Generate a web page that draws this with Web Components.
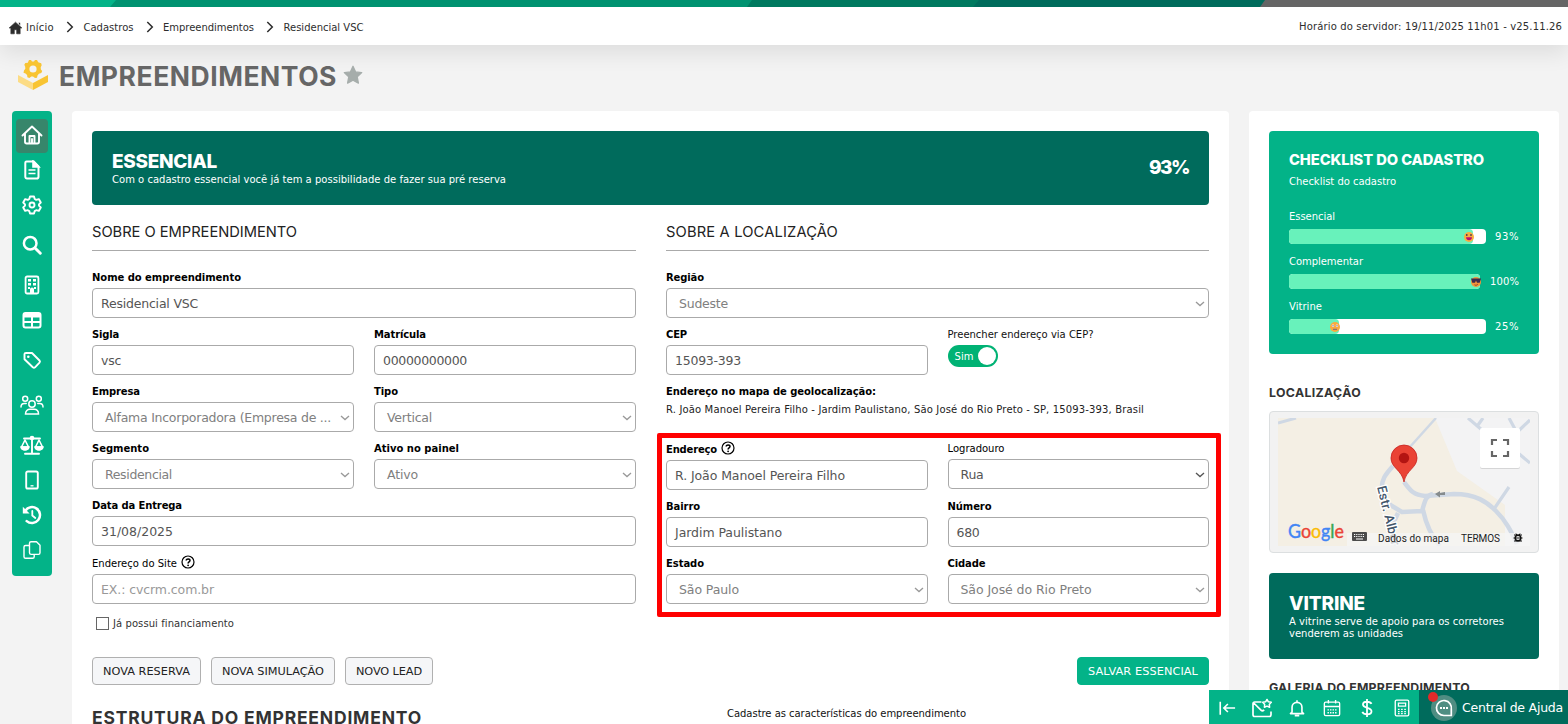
<!DOCTYPE html>
<html lang="pt-BR">
<head>
<meta charset="utf-8">
<title>Empreendimentos</title>
<style>
  :root{
    --green:#03b388;
    --dark:#006b5c;
    --title:Inter,"Liberation Sans",sans-serif;
  }
  html,body{
    margin:0;
    height:724px;
    overflow:hidden;
  }
  body{
    font:10px/12px "DejaVu Sans",sans-serif;
    color:#222;
    background:#f3f3f3;
    position:relative;
  }
</style>
</head>
<body>
<crm-app></crm-app>

<script>
const ICONS = {
  house:['0 0 24 24','<path d="M12 2 1 12h3v10h6v-7h4v7h6V12h3z" fill="currentColor" stroke="currentColor" stroke-linejoin="round"/><path d="M17 3h3v5" fill="currentColor"/>'],
  chevron:['0 0 8 12','<path d="M1.300 1 6.300 6l-5 5" fill="none" stroke="currentColor" stroke-width="1.500"/>'],
  down:['0 0 10 6','<path d="M1 1l4 3.600L9 1" fill="none" stroke="currentColor" stroke-width="1.300"/>'],
  star:['0 0 24 24','<path d="M12 1.500l3.200 6.800 7.300.9-5.400 5.100 1.400 7.400L12 18.100l-6.500 3.600 1.400-7.400L1.500 9.200l7.300-.9z" fill="currentColor" stroke="currentColor" stroke-width="1.500" stroke-linejoin="round"/>'],
  product:['0 0 30 30','<path d="M0 15l15 8v7L0 22z" fill="#fcdc85"/><path d="M30 15l-15 8v7l15-8z" fill="#f8c433"/><path d="M11 0h2l1 1.600h2L17 0h2l1.200 2.300 3 .9.500 2-1 2 .2 2.300 1.300 1.600-.9 2-2.400.6-1.400 1.900-.5 2.200-2 .2-2-1.400h-1.700l-1.900 1.400-2-.8-.3-2.300-1.600-1.300-2-.8L6 10.500l1.300-1.700-.1-2-.9-2 1-1.700 2.500-.4z" fill="#f8c433"/><circle cx="15" cy="9" r="3.600" fill="#f3f3f3"/>'],
  home:['0 0 22 22','<path d="M1.500 11.500 11 2.500l9.500 9M4 9.500v8.300c0 1.100.6 1.700 1.700 1.700h10.600c1.100 0 1.700-.6 1.700-1.700V9.500M8.500 19v-7h5v7M11 15v4" fill="none" stroke="currentColor" stroke-width="1.900" stroke-linecap="round" stroke-linejoin="round"/>'],
  doc:['0 0 20 20','<path d="M4.500 1.500h7.300l4.700 4.800v10.400c0 1-.7 1.800-1.800 1.800H5c-1 0-1.700-.7-1.700-1.800V3.200c0-1 .5-1.700 1.200-1.700z" fill="none" stroke="currentColor" stroke-width="2"/><path d="M11 1l6 6h-6zM6.500 10h7M6.500 13.500h7" fill="currentColor" stroke="currentColor" stroke-width="1.600"/>'],
  gear:['0 0 20 20','<path d="M8 1.500h4l.7 2.500 1.500.8 2.600-.7 2 3.400-1.800 1.800v1.400l1.800 1.800-2 3.400-2.600-.7-1.500.9-.7 2.400H8l-.7-2.400-1.500-.9-2.600.7-2-3.400L3 10.700V9.300L1.200 7.500l2-3.400 2.600.7L7.300 4z" fill="none" stroke="currentColor" stroke-width="1.900" stroke-linejoin="round"/><circle cx="10" cy="10" r="2.500" fill="none" stroke="currentColor" stroke-width="1.900"/>'],
  search:['0 0 20 20','<circle cx="8.200" cy="8.200" r="6.300" fill="none" stroke="currentColor" stroke-width="2.500"/><path d="M13 13l5.300 5.300" stroke="currentColor" stroke-width="2.900" stroke-linecap="round"/>'],
  building:['0 0 20 20','<rect x="3.600" y="1.500" width="12.800" height="17" rx="1.500" fill="none" stroke="currentColor" stroke-width="1.800"/><path d="M6 4h3v2.500H6zM11 4h3v2.500h-3zM6 8h3v2.500H6zM11 8h3v2.500h-3zM6 12h2v2H6zM12 12h2v2h-2zM8 18v-3.500a2 2 0 0 1 4 0V18z" fill="currentColor"/>'],
  table:['0 0 20 20','<rect x="1.500" y="3" width="17" height="14.500" rx="2" fill="none" stroke="currentColor" stroke-width="2"/><path d="M1 3h18v4.500H1z" fill="currentColor"/><path d="M10 7v10M2 12h16" stroke="currentColor" stroke-width="2"/>'],
  tag:['0 0 20 20','<path d="M2.500 4v5.300l8.300 8c.7.600 1.600.600 2.200 0l4.500-4.700c.6-.7.6-1.500 0-2.100L10 3H4c-1 0-1.500.3-1.500 1z" fill="none" stroke="currentColor" stroke-width="1.900" stroke-linejoin="round"/><circle cx="6.300" cy="6.700" r="1.300" fill="currentColor"/>'],
  people:['0 0 24 20','<g fill="none" stroke="currentColor" stroke-width="1.500" stroke-linecap="round"><circle cx="12" cy="9" r="3.200"/><circle cx="5.200" cy="3.700" r="2.500"/><circle cx="18.800" cy="3.700" r="2.500"/><path d="M5.500 19c0-3 2-4.800 4.500-4.800h4c2.500 0 4.500 1.800 4.500 4.800zM1 12c0-2.200 1.500-3.600 3.300-3.600h1.900M23 12c0-2.200-1.500-3.600-3.300-3.600h-1.900"/></g>'],
  scale:['0 0 24 20','<path d="M4 3.500h16M12 2v16M5 18.700h14" fill="none" stroke="currentColor" stroke-width="1.900" stroke-linecap="round"/><circle cx="12" cy="3" r="2.300" fill="currentColor"/><path d="M5 5 1.500 12h7zM19 5l-3.500 7h7z" fill="none" stroke="currentColor" stroke-width="1.600" stroke-linejoin="round"/><path d="M.2 11.300h9.600c0 6-9.600 6-9.600 0zM14.200 11.300h9.600c0 6-9.600 6-9.600 0z" fill="currentColor"/>'],
  phone:['0 0 20 20','<rect x="4.200" y="1.500" width="11.600" height="17" rx="1.600" fill="none" stroke="currentColor" stroke-width="1.900"/><path d="M8.500 15.800h3" stroke="currentColor" stroke-width="1.300"/>'],
  history:['0 0 20 20','<path d="M3.300 5.700a8 8 0 1 1 1.400 10.400" fill="none" stroke="currentColor" stroke-width="2.500" stroke-linecap="round"/><path d="M.8 1.800v6.600h6.800z" fill="currentColor"/><path d="M10.300 6v4.500l3 2.500" fill="none" stroke="currentColor" stroke-width="1.800" stroke-linecap="round"/>'],
  copy:['0 0 20 20','<g fill="none" stroke="currentColor" stroke-width="1.400" stroke-linejoin="round"><path d="M9 1.700h5.500l3.500 3.500v7.600c0 1-.6 1.600-1.600 1.600H9.200c-1 0-1.700-.6-1.700-1.600V3.300c0-1 .5-1.600 1.500-1.600z"/><path d="M7.500 5.500H3.600C2.600 5.500 2 6.100 2 7.100v9.600c0 1 .6 1.600 1.600 1.600h7c1 0 1.600-.6 1.600-1.600v-2.200"/></g>'],
  help:['0 0 14 14','<circle cx="7" cy="7" r="6" fill="none" stroke="currentColor" stroke-width="1.200"/><path d="M5.200 5.600C5.200 3.300 9 3.400 9 5.500 9 7 7.100 6.900 7.100 8.400" fill="none" stroke="currentColor" stroke-width="1.500"/><circle cx="7.100" cy="10.300" r=".9" fill="currentColor"/>'],
  collapse:['0 0 20 20','<path d="M2.500 3v14.500M19 10H6.500M11 5.500 6.500 10l4.500 4.500" fill="none" stroke="currentColor" stroke-width="1.800"/>'],
  mail:['0 0 22 20','<path d="M10.500 4H3.800C2.600 4 2 4.600 2 5.700v11.100c0 1.100.6 1.700 1.800 1.700h14.400c1.200 0 1.800-.6 1.800-1.700v-3.300M2.800 5l7.400 7.300c.8.700 1.800.6 3-.5" fill="none" stroke="currentColor" stroke-width="1.700"/><path d="M16 1.500l1.400 2.300 2.900.5-2 2.200.3 2.700-2.600-1.100-2.600 1.100.3-2.700-2-2.200 2.900-.5z" fill="none" stroke="currentColor" stroke-width="1.500" stroke-linejoin="round"/>'],
  bell:['0 0 20 20','<path d="M4.500 14.500V9.300c0-3 2.300-5.500 5.500-5.500s5.500 2.500 5.500 5.500v5.200l1.800 1.700H2.700zM10 3.500V1.500M7.500 18.500h5" fill="none" stroke="currentColor" stroke-width="1.800" stroke-linejoin="round"/>'],
  calendar:['0 0 20 20','<rect x="1.500" y="3.500" width="17" height="15" rx="1.500" fill="none" stroke="currentColor" stroke-width="1.500"/><path d="M2 8.300h16M6 1v4M14 1v4" stroke="currentColor" stroke-width="1.500"/><path d="M5 12h10M5 15.300h10" stroke="currentColor" stroke-width="1.500" stroke-dasharray="1.600 1.200"/>'],
  dollar:['0 0 20 20','<path d="M10 0v20M15 5.500C13.500 2.300 5.500 2 5.500 6.200c0 4.600 9.500 2.600 9.500 7.400 0 4.500-8.700 4.200-10.200.7" fill="none" stroke="currentColor" stroke-width="2"/>'],
  calc:['0 0 20 20','<rect x="2.500" y="1.200" width="15" height="17.600" rx="1.500" fill="none" stroke="currentColor" stroke-width="1.500"/><path d="M6 4.500h8v3.500H6z" fill="none" stroke="currentColor" stroke-width="1.400"/><path d="M5.500 11.500h9M5.500 14h9M5.500 16.300h9" stroke="currentColor" stroke-width="1.300" stroke-dasharray="1.800 1.700"/>'],
  chat:['0 0 26 26','<circle cx="13" cy="13" r="13" fill="#4f8d82"/><path d="M20 20.500h-7a7.500 7.500 0 1 1 7.300-6v6z" fill="none" stroke="currentColor" stroke-width="1.700"/><path d="M9 13h2M12 13h2M15 13h2" stroke="currentColor" stroke-width="2"/>'],
  happy:['0 0 10 10','<circle cx="5" cy="5" r="5" fill="#f9ac40"/><path d="M2 5.200h6c0 4-6 4-6 0z" fill="#b80d72"/><path d="M2.800 2v2M7 2v2" stroke="#43304d" stroke-width="1.200"/>'],
  cool:['0 0 10 10','<circle cx="5" cy="5" r="5" fill="#f4943a"/><path d="M0 1.500h10L8.700 5.700H6L5 3.500l-1 2.200H1.300z" fill="#3d284e"/><path d="M3.500 7.800c1.400.8 2.300.4 3.300-.6" fill="none" stroke="#863e35"/>'],
  meh:['0 0 10 10','<circle cx="5" cy="5" r="5" fill="#f9a93f"/><circle cx="3" cy="3.800" r="1.200" fill="#fff"/><circle cx="7" cy="3.800" r="1.200" fill="#fff"/><path d="M3 3v1.500M7 3v1.500M3 7.300h4" stroke="#776280"/>']
};

class AppIcon extends HTMLElement{
  connectedCallback(){
    const [box, body] = ICONS[this.getAttribute('name')];
    const w = this.getAttribute('w');
    const h = this.getAttribute('h') || w;
    this.attachShadow({mode: 'open'}).innerHTML = `
    <style>
      :host{ display:inline-flex; flex:none; }
      svg{ display:block; }
    </style>
    <svg width="${w}" height="${h}" viewBox="${box}">${body}</svg>`;
  }
}

// Single line of text, tracked so that it spans "w" pixels
class FitText extends HTMLElement{
  connectedCallback(){
    this.attachShadow({mode: 'open'}).innerHTML = `
    <style>
      :host{ display:inline-block; white-space:nowrap; }
    </style>
    <span><slot></slot></span>`;
    const span = this.shadowRoot.querySelector('span');
    const gap = this.getAttribute('w') - span.getBoundingClientRect().width;
    span.style.letterSpacing = `${gap / this.textContent.length}px`;
  }
}

class TopBar extends HTMLElement{
  connectedCallback(){
    const crumbs = [['Início', 28], ['Cadastros', 50], ['Empreendimentos', 91], ['Residencial VSC', 80]];
    this.attachShadow({mode: 'open'}).innerHTML = `
    <style>
      :host{ display:block; }
      .strip{ display:block; }
      nav{
        height:38px;
        box-sizing:border-box;
        padding:3px 6px 0 8px;
        display:flex;
        align-items:center;
        background:#fff;
        color:#2d2d2d;
        box-shadow:0 8px 22px rgba(0,0,0,.09);
      }
      .home{ margin-right:3px; }
      .sep{ margin:0 9.500px 0 12px; padding-bottom:2px; }
      .time{ margin-left:auto; padding-bottom:2px; }
    </style>
    <svg class="strip" width="1568" height="7">
      <rect width="1568" height="7" fill="#656565"/>
      <path d="M0 0h1265l-5 7H0z" fill="#006b5c"/>
      <path d="M0 0h979l-6 7H0z" fill="#00795f"/>
      <path d="M0 0h752l-5 7H0z" fill="#009270"/>
      <path d="M0 0h116l-6 7H0z" fill="#03b388"/>
    </svg>
    <nav>
      <app-icon class="home" name="house" w="15" h="14"></app-icon>
      ${crumbs.map(([t, w]) => `<fit-text w="${w}">${t}</fit-text>`).join('<app-icon class="sep" name="chevron" w="8" h="12"></app-icon>')}
      <fit-text class="time" w="263">Horário do servidor: 19/11/2025 11h01 - v25.11.26</fit-text>
    </nav>`;
  }
}

class SideMenu extends HTMLElement{
  connectedCallback(){
    const items = [['home', 22, 0], ['doc', 20, 0], ['gear', 20, 0], ['search', 20, 5], ['building', 20, 5], ['table', 20, 0],
      ['tag', 20, 5], ['people', 24, 10], ['scale', 24, 5], ['phone', 20, 0], ['history', 20, 0], ['copy', 20, 0]];
    this.attachShadow({mode: 'open'}).innerHTML = `
    <style>
      :host{
        display:flex;
        flex-direction:column;
        padding:7px 4px 8px;
        border-radius:4px;
        background:var(--green);
        color:#fff;
      }
      div{
        height:35px;
        box-sizing:border-box;
        padding:0 1px 1px 0;
        display:flex;
        align-items:center;
        justify-content:center;
      }
      div.active{
        height:34px;
        margin-top:1px;
        padding-bottom:2px;
        border-radius:4px;
        background:#37866b;
      }
    </style>
    ${items.map(([n, w, m], i) => `<div class="${i ? '' : 'active'}" style="${m ? `margin-top:${m}px` : ''}"><app-icon name="${n}" w="${w}" h="${w > 22 ? 20 : w}"></app-icon></div>`).join('')}`;
  }
}

class FormField extends HTMLElement{
  connectedCallback(){
    const get = n => this.getAttribute(n);
    const kind = get('kind') || 'input';
    this.attachShadow({mode: 'open'}).innerHTML = `
    <style>
      :host{ display:block; color:#000; }
      :host([wide]){ grid-column:span 2; }
      label{
        display:flex;
        align-items:center;
        height:27px;
        box-sizing:border-box;
        padding-top:7px;
        font-weight:bold;
      }
      :host([light]) label{ font-weight:normal; }
      :host([help]) label{ height:28px; padding-top:8px; }
      :host([help]) app-icon.help{ margin:-4px 0 0 4px; }
      .box{
        height:30px;
        box-sizing:border-box;
        border:1px solid #aaa;
        border-radius:4px;
        padding:2px 3px 0 8px;
        display:flex;
        align-items:center;
        justify-content:space-between;
        background:#fff;
        color:#555;
        font-size:12.500px;
        line-height:16px;
      }
      .select{ padding-left:12px; color:#808080; }
      .strong{ color:#555; }
      .select:not(.strong) app-icon{ color:#999; }
      .hint{ color:#999; }
    </style>
    <label><fit-text w="${get('lw')}">${get('label')}</fit-text>${this.hasAttribute('help') ? '<app-icon class="help" name="help" w="14"></app-icon>' : ''}</label>
    <div class="box ${kind}">
      <fit-text w="${get('vw')}">${get('value')}</fit-text>
      ${kind.includes('select') ? '<app-icon name="down" w="10" h="6"></app-icon>' : ''}
    </div>`;
  }
}

class TitleBanner extends HTMLElement{
  connectedCallback(){
    this.attachShadow({mode: 'open'}).innerHTML = `
    <style>
      :host{
        display:flex;
        justify-content:space-between;
        box-sizing:border-box;
        padding:20px;
        border-radius:4px;
        background:var(--dark);
        color:#fff;
      }
      h2{
        margin:0 0 2px;
        font:800 19px/21px var(--title);
      }
      .side{ font:800 19px/21px var(--title); padding-top:6px; }
    </style>
    <div><h2><slot name="title"></slot></h2><slot></slot></div>
    <div class="side"><slot name="side"></slot></div>`;
  }
}

class ProgressRow extends HTMLElement{
  connectedCallback(){
    const get = n => this.getAttribute(n);
    this.attachShadow({mode: 'open'}).innerHTML = `
    <style>
      :host{ display:block; height:45px; }
      .row{ display:flex; align-items:center; justify-content:space-between; margin-top:6px; }
      .track{ height:15px; width:${get('track')}px; border-radius:4px; background:#fff; }
      .fill{
        height:15px;
        width:${get('fill')}px;
        border-radius:4px;
        background:#68f2bb;
        display:flex;
        align-items:center;
        justify-content:flex-end;
      }
      .fill app-icon{ margin-right:-1px; }
    </style>
    <fit-text w="${get('lw')}">${get('label')}</fit-text>
    <div class="row">
      <div class="track"><div class="fill"><app-icon name="${get('face')}" w="10"></app-icon></div></div>
      <fit-text w="${get('pw')}">${get('percent')}</fit-text>
    </div>`;
  }
}

class MapPreview extends HTMLElement{
  connectedCallback(){
    this.attachShadow({mode: 'open'}).innerHTML = `
    <style>
      :host{
        display:block;
        box-sizing:border-box;
        height:142px;
        padding:6px 8px;
        border:1px solid #dcdfe0;
        border-radius:4px;
        background:#f2f2f2;
      }
      svg{ display:block; }
      text{ font-family:Roboto,sans-serif; }
    </style>
    <svg width="252" height="128" viewBox="0 0 252 128">
      <rect width="252" height="128" fill="#f3f3f4"/>
      <path d="M0 0h157l22 53 48 34v41H0z" fill="#f4efe4"/>
      <g fill="none" stroke="#cfd8e4" stroke-linejoin="round">
        <path d="M0 5 18 0" stroke-width="3"/>
        <path d="M158 0 131 30" stroke-width="2.500"/>
        <path d="M126 64c6 8 9 13 21 14l29-2c22 0 33 8 42 17 10 10 15 20 21 33" stroke-width="4.500"/>
        <path d="M115 48c-7 8-12 13-11 24 1 7 4 12 10 16l10 6 20-1c3-9 3-15 11-17M145 92c3 14 7 25 17 36M120 95l-7 15 6 18" stroke-width="4.500"/>
        <path d="M216 91l15-22M190 0l14 12M200 7l5-7M231 0l7 13M252 2l-18 17M240 35l12 10" stroke-width="3.200"/>
      </g>
      <path d="M167 77h-5v2.500l-5-3.500 5-3v2l5-1z" fill="#858b8d"/>
      <path d="M126 64c-2-12-13-14-13-24a13 13 0 0 1 26 0c0 10-11 12-13 24z" fill="#ea4335" stroke="#c5221f" stroke-width=".8"/>
      <circle cx="126" cy="40" r="5.200" fill="#b31412"/>
      <text transform="translate(99 69) rotate(76)" font-size="13" font-weight="500" fill="#43566b" stroke="#fff" stroke-width="2.500" paint-order="stroke" textLength="61" lengthAdjust="spacingAndGlyphs">Estr. Alber</text>
      <rect x="69" y="115" width="183" height="13" fill="#f5f5f5" opacity=".75"/>
      <text x="10" y="120" font-size="19" stroke-width=".4" textLength="56" lengthAdjust="spacingAndGlyphs" style="font-family:Lato,sans-serif"><tspan fill="#4285f4" stroke="#4285f4">G</tspan><tspan fill="#ea4335" stroke="#ea4335">o</tspan><tspan fill="#fbbc05" stroke="#fbbc05">o</tspan><tspan fill="#4285f4" stroke="#4285f4">g</tspan><tspan fill="#34a853" stroke="#34a853">l</tspan><tspan fill="#ea4335" stroke="#ea4335">e</tspan></text>
      <rect x="74" y="114" width="15" height="9" rx="1" fill="#4b4b4b"/>
      <path d="M76 116.500h11M76 118.500h11" stroke="#fff" stroke-dasharray="1.200 1"/>
      <path d="M78 121h7" stroke="#fff"/>
      <text x="100" y="124" font-size="10" fill="#222" textLength="71">Dados do mapa</text>
      <text x="183" y="124" font-size="10" fill="#222" textLength="39">TERMOS</text>
      <g stroke="#111" fill="none"><circle cx="240" cy="120" r="2.800" stroke-width="1.500"/><path d="M236 117h8M235.500 120h9M236 123h8M238 115.500l1 2M242 115.500l-1 2" stroke-width="1"/></g>
      <rect x="202" y="11" width="40" height="40" rx="2" fill="#000" opacity=".12"/>
      <rect x="202" y="10" width="40" height="40" rx="2" fill="#fff"/>
      <path d="M214 27v-5h5M225 22h5v5M230 33v5h-5M219 38h-5v-5" fill="none" stroke="#666" stroke-width="2.200"/>
    </svg>`;
  }
}

class CrmButton extends HTMLElement{
  connectedCallback(){
    this.attachShadow({mode: 'open'}).innerHTML = `
    <style>
      :host{
        display:inline-flex;
        align-items:center;
        height:28px;
        box-sizing:border-box;
        padding:1px 10px 0;
        border:1px solid #b0b0b0;
        border-radius:4px;
        background:#f5f6f8;
        color:#222;
        font-size:11.300px;
      }
      :host([primary]){
        margin-left:auto;
        border-color:var(--green);
        background:var(--green);
        color:#fff;
      }
    </style>
    <fit-text w="${this.getAttribute('w')}">${this.getAttribute('label')}</fit-text>`;
  }
}

class MainCard extends HTMLElement{
  connectedCallback(){
    this.attachShadow({mode: 'open'}).innerHTML = `
    <style>
      :host{
        display:block;
        box-sizing:border-box;
        height:640px;
        padding:20px;
        border-radius:4px;
        background:#fff;
      }
      title-banner{ height:74px; }
      .cols{ display:grid; grid-template-columns:544px 543px; gap:30px; height:439px; }
      h3{
        margin:0 0 10px;
        height:46px;
        box-sizing:border-box;
        padding-top:17px;
        border-bottom:1px solid #aaa;
        font:14.700px/20px var(--title);
        color:#222;
      }
      .fields{ display:grid; grid-template-columns:1fr 1fr; column-gap:20px; align-items:start; }
      .check{ display:flex; align-items:center; gap:4px; margin:13px 0 0 4px; color:#333; }
      .check i{ width:11px; height:11px; border:1px solid #666; }
      .cep{ padding-top:11px; color:#111; }
      .toggle{
        width:50px;
        height:22px;
        box-sizing:border-box;
        margin-top:4px;
        padding:2px 2px 2px 7px;
        border-radius:11px;
        background:#00b274;
        color:#fff;
        display:flex;
        align-items:center;
        justify-content:space-between;
      }
      .toggle fit-text{ padding-top:1px; }
      .toggle i{ width:18px; height:18px; border-radius:50%; background:#fff; }
      .address{ grid-column:span 2; height:57px; box-sizing:border-box; padding-top:11px; }
      .address b{ display:block; margin-bottom:6px; color:#000; }
      .buttons{ display:flex; gap:10px; margin-top:13px; }
      .foot{ display:grid; grid-template-columns:635px auto; align-items:start; margin-top:26px; color:#111; }
      .foot h2{ margin:0; font:bold 17.500px/14px var(--title); color:#333; }
      .foot > fit-text{ margin-top:-3px; }
    </style>
    <title-banner>
      <fit-text slot="title" w="105">ESSENCIAL</fit-text>
      <fit-text w="394">Com o cadastro essencial você já tem a possibilidade de fazer sua pré reserva</fit-text>
      <fit-text slot="side" w="40">93%</fit-text>
    </title-banner>
    <div class="cols">
      <section>
        <h3><fit-text w="205">SOBRE O EMPREENDIMENTO</fit-text></h3>
        <div class="fields">
          <form-field wide label="Nome do empreendimento" lw="149" value="Residencial VSC" vw="97"></form-field>
          <form-field label="Sigla" lw="27" value="vsc" vw="20"></form-field>
          <form-field label="Matrícula" lw="52" value="00000000000" vw="84"></form-field>
          <form-field label="Empresa" lw="48" kind="select" value="Alfama Incorporadora (Empresa de ..." vw="226"></form-field>
          <form-field label="Tipo" lw="24" kind="select" value="Vertical" vw="45"></form-field>
          <form-field label="Segmento" lw="57" kind="select" value="Residencial" vw="67"></form-field>
          <form-field label="Ativo no painel" lw="85" kind="select" value="Ativo" vw="31"></form-field>
          <form-field wide label="Data da Entrega" lw="90" value="31/08/2025" vw="72"></form-field>
          <form-field wide light help label="Endereço do Site" lw="85" kind="hint" value="EX.: cvcrm.com.br" vw="113"></form-field>
        </div>
        <div class="check"><i></i><fit-text w="121">Já possui financiamento</fit-text></div>
      </section>
      <section>
        <h3><fit-text w="172">SOBRE A LOCALIZAÇÃO</fit-text></h3>
        <div class="fields">
          <form-field wide label="Região" lw="38" kind="select" value="Sudeste" vw="49"></form-field>
          <form-field label="CEP" lw="21" value="15093-393" vw="66"></form-field>
          <div class="cep">
            <fit-text w="146">Preencher endereço via CEP?</fit-text>
            <div class="toggle"><fit-text w="19">Sim</fit-text><i></i></div>
          </div>
          <div class="address">
            <b><fit-text w="210">Endereço no mapa de geolocalização:</fit-text></b>
            <fit-text w="478">R. João Manoel Pereira Filho - Jardim Paulistano, São José do Rio Preto - SP, 15093-393, Brasil</fit-text>
          </div>
          <form-field help label="Endereço" lw="51" value="R. João Manoel Pereira Filho" vw="170"></form-field>
          <form-field light label="Logradouro" lw="57" kind="select strong" value="Rua" vw="23"></form-field>
          <form-field label="Bairro" lw="34" value="Jardim Paulistano" vw="107"></form-field>
          <form-field label="Número" lw="44" value="680" vw="23"></form-field>
          <form-field label="Estado" lw="38" kind="select" value="São Paulo" vw="60"></form-field>
          <form-field label="Cidade" lw="38" kind="select" value="São José do Rio Preto" vw="131"></form-field>
        </div>
      </section>
    </div>
    <div class="buttons">
      <crm-button label="NOVA RESERVA" w="87"></crm-button>
      <crm-button label="NOVA SIMULAÇÃO" w="102"></crm-button>
      <crm-button label="NOVO LEAD" w="66"></crm-button>
      <crm-button primary label="SALVAR ESSENCIAL" w="110"></crm-button>
    </div>
    <div class="foot">
      <h2><fit-text w="330">ESTRUTURA DO EMPREENDIMENTO</fit-text></h2>
      <fit-text w="239">Cadastre as características do empreendimento</fit-text>
    </div>`;
  }
}

class SideCard extends HTMLElement{
  connectedCallback(){
    this.attachShadow({mode: 'open'}).innerHTML = `
    <style>
      :host{
        display:block;
        box-sizing:border-box;
        height:640px;
        padding:20px;
        border-radius:4px;
        background:#fff;
      }
      .list{
        height:223px;
        box-sizing:border-box;
        padding:20px;
        border-radius:4px;
        background:var(--green);
        color:#fff;
      }
      h2{ margin:0 0 7px; font:800 14.700px/18px var(--title); }
      .rows{ margin-top:23px; }
      h3{ margin:0; font:bold 12.300px/16px var(--title); color:#333; }
      .place{ margin:31px 0 10px; }
      title-banner{ height:86px; margin:20px 0 21px; }
    </style>
    <div class="list">
      <h2><fit-text w="195">CHECKLIST DO CADASTRO</fit-text></h2>
      <fit-text w="107">Checklist do cadastro</fit-text>
      <div class="rows">
        <progress-row label="Essencial" lw="46" track="197" fill="184" face="happy" percent="93%" pw="24"></progress-row>
        <progress-row label="Complementar" lw="74" track="191" fill="191" face="cool" percent="100%" pw="29"></progress-row>
        <progress-row label="Vitrine" lw="33" track="197" fill="50" face="meh" percent="25%" pw="24"></progress-row>
      </div>
    </div>
    <h3 class="place"><fit-text w="92">LOCALIZAÇÃO</fit-text></h3>
    <map-preview></map-preview>
    <title-banner>
      <fit-text slot="title" w="76">VITRINE</fit-text>
      <fit-text w="215">A vitrine serve de apoio para os corretores</fit-text><br>
      <fit-text w="114">venderem as unidades</fit-text>
    </title-banner>
    <h3><fit-text w="201">GALERIA DO EMPREENDIMENTO</fit-text></h3>`;
  }
}

class HelpDock extends HTMLElement{
  connectedCallback(){
    this.attachShadow({mode: 'open'}).innerHTML = `
    <style>
      :host{
        position:absolute;
        right:0;
        bottom:0;
        width:359px;
        height:34px;
        display:grid;
        grid-template-columns:210px 149px;
        color:#fff;
      }
      .tools{ display:grid; grid-template-columns:repeat(6, 35px); place-items:center; background:var(--green); padding-top:2px; }
      .help{
        display:flex;
        align-items:center;
        gap:5px;
        padding:2px 0 0 12px;
        background:var(--dark);
        font-size:12.500px;
        line-height:16px;
        position:relative;
      }
      .dot{ position:absolute; left:9px; top:2px; width:10px; height:10px; border-radius:50%; background:#e12a2a; }
    </style>
    <div class="tools">
      ${['collapse', 'mail', 'bell', 'calendar', 'dollar', 'calc'].map(n => `<app-icon name="${n}" w="${n == 'mail' ? 22 : 18}" h="${n == 'mail' ? 20 : 18}"></app-icon>`).join('')}
    </div>
    <div class="help"><app-icon name="chat" w="26"></app-icon><i class="dot"></i><fit-text w="101">Central de Ajuda</fit-text></div>`;
  }
}

class CrmApp extends HTMLElement{
  connectedCallback(){
    this.attachShadow({mode: 'open'}).innerHTML = `
    <style>
      :host{ display:block; }
      header{
        display:flex;
        align-items:center;
        height:66px;
        box-sizing:border-box;
        padding:0 18px 6px;
      }
      h1{ margin:0 6px 0 11px; padding-top:2px; font:bold 26.500px/32px var(--title); color:#666; }
      header app-icon:last-child{ color:#a6adab; }
      main{
        display:grid;
        grid-template-columns:40px 1157px 310px;
        gap:20px;
        align-items:start;
        padding-left:12px;
      }
      .mark{
        position:absolute;
        left:657px;
        top:433px;
        width:554px;
        height:174px;
        border:5px solid red;
        border-radius:2px;
      }
    </style>
    <top-bar></top-bar>
    <header>
      <app-icon name="product" w="30"></app-icon>
      <h1><fit-text w="278">EMPREENDIMENTOS</fit-text></h1>
      <app-icon name="star" w="20"></app-icon>
    </header>
    <main>
      <side-menu></side-menu>
      <main-card></main-card>
      <side-card></side-card>
    </main>
    <div class="mark"></div>
    <help-dock></help-dock>`;
  }
}

customElements.define('crm-app', CrmApp);
customElements.define('top-bar', TopBar);
customElements.define('side-menu', SideMenu);
customElements.define('main-card', MainCard);
customElements.define('side-card', SideCard);
customElements.define('help-dock', HelpDock);
customElements.define('title-banner', TitleBanner);
customElements.define('progress-row', ProgressRow);
customElements.define('map-preview', MapPreview);
customElements.define('form-field', FormField);
customElements.define('crm-button', CrmButton);
customElements.define('app-icon', AppIcon);
// last, as it measures text that the others have laid out
customElements.define('fit-text', FitText);
</script>
</body>
</html>
